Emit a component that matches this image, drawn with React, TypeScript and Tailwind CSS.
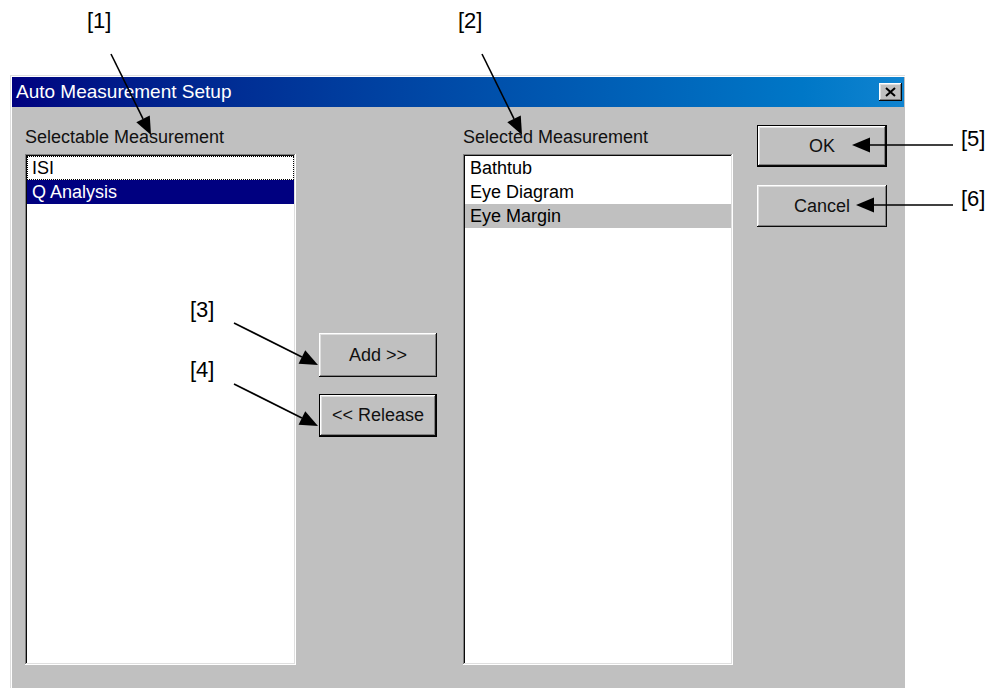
import { type FC } from "react";

const raised =
  "shadow-[inset_-1px_-1px_#0a0a0a,inset_1px_1px_#ffffff,inset_-2px_-2px_#808080,inset_2px_2px_#dfdfdf]";
const sunken =
  "shadow-[inset_-1px_-1px_#ffffff,inset_1px_1px_#808080,inset_-2px_-2px_#dfdfdf,inset_2px_2px_#0a0a0a]";

/** 注釈の矢印（線＋塗りつぶし三角） */
const Arrow: FC<{ x1: number; y1: number; x2: number; y2: number }> = ({ x1, y1, x2, y2 }) => {
  const dx = x2 - x1;
  const dy = y2 - y1;
  const len = Math.hypot(dx, dy);
  const ux = dx / len;
  const uy = dy / len;
  const bx = x2 - ux * 18;
  const by = y2 - uy * 18;
  const px = -uy * 7.5;
  const py = ux * 7.5;
  return (
    <g>
      <line x1={x1} y1={y1} x2={bx} y2={by} stroke="#000" strokeWidth={1.6} />
      <polygon points={`${x2},${y2} ${bx + px},${by + py} ${bx - px},${by - py}`} fill="#000" />
    </g>
  );
};

const Button: FC<{ label: string; isDefault?: boolean; className?: string }> = ({
  label,
  isDefault,
  className = "",
}) => (
  <div
    className={`flex items-center justify-center bg-[#c0c0c0] text-[18px] leading-[21px] text-[#111] ${
      isDefault ? "border border-black" : ""
    } ${className}`}
  >
    <div className={`flex h-full w-full items-center justify-center ${raised}`}>{label}</div>
  </div>
);

const ListBox: FC<{ children: React.ReactNode }> = ({ children }) => (
  <div className={`h-[511px] bg-white p-[2px] ${sunken}`}>{children}</div>
);

const labels = [
  { t: "[1]", x: 87, y: 10 },
  { t: "[2]", x: 458, y: 10 },
  { t: "[3]", x: 190, y: 299 },
  { t: "[4]", x: 190, y: 359 },
  { t: "[5]", x: 961, y: 128 },
  { t: "[6]", x: 961, y: 188 },
];

export default function App() {
  return (
    <div className="relative h-[688px] w-[1006px] overflow-hidden bg-white font-['Liberation_Sans',Arial,sans-serif] text-black">
      <div className="pl-[10px] pt-[75px]">
        {/* ダイアログ本体 */}
        <div className="h-[613px] w-[895px] bg-[#c0c0c0] pl-[2px] pt-[2px] shadow-[inset_1px_1px_#dfdfdf,inset_2px_2px_#ffffff]">
          {/* タイトルバー */}
          <div className="flex h-[30px] w-[892px] items-center justify-between bg-linear-to-r from-[#000080] to-[#1084d0] pl-[4px] pr-[2px]">
            <span className="text-[19px] leading-[22px] text-white">Auto Measurement Setup</span>
            <div className={`flex h-[18px] w-[23px] items-center justify-center bg-[#c0c0c0] ${raised}`}>
              <svg width="11" height="10" viewBox="0 0 11 10">
                <path d="M1 1 L10 9 M10 1 L1 9" stroke="#000" strokeWidth="2" />
              </svg>
            </div>
          </div>

          {/* コンテンツ */}
          <div className="flex pl-[13px] pt-[18px]">
            {/* 選択可能な測定 */}
            <div className="w-[271px]">
              <div className="h-[29px] pt-[2px] text-[18px] leading-[21px] text-[#111]">Selectable Measurement</div>
              <ListBox>
                <div className="h-[24px] border border-dotted border-black pl-[4px] text-[18px] leading-[22px]">ISI</div>
                <div className="h-[24px] bg-[#000080] pl-[5px] text-[18px] leading-[24px] text-white">Q Analysis</div>
              </ListBox>
            </div>

            {/* 追加・解除ボタン */}
            <div className="ml-[23px] w-[118px] pt-[208px]">
              <Button label="Add >>" className="h-[44px]" />
              <Button label="<< Release" isDefault className="mt-[17px] h-[43px]" />
            </div>

            {/* 選択済みの測定 */}
            <div className="ml-[26px] w-[270px]">
              <div className="h-[29px] pt-[2px] text-[18px] leading-[21px] text-[#111]">Selected Measurement</div>
              <ListBox>
                <div className="h-[24px] pl-[5px] text-[18px] leading-[24px]">Bathtub</div>
                <div className="h-[24px] pl-[5px] text-[18px] leading-[24px]">Eye Diagram</div>
                <div className="h-[24px] bg-[#c0c0c0] pl-[5px] text-[18px] leading-[24px]">Eye Margin</div>
              </ListBox>
            </div>

            {/* OK・キャンセル */}
            <div className="ml-[24px] w-[130px]">
              <Button label="OK" isDefault className="h-[42px]" />
              <Button label="Cancel" className="mt-[18px] h-[42px]" />
            </div>
          </div>
        </div>
      </div>

      {/* 注釈 */}
      <svg className="pointer-events-none absolute left-0 top-0" width="1006" height="688">
        <Arrow x1={111} y1={54} x2={151} y2={135} />
        <Arrow x1={482} y1={54} x2={522} y2={135} />
        <Arrow x1={234} y1={323} x2={318} y2={365} />
        <Arrow x1={234} y1={384} x2={318} y2={426} />
        <Arrow x1={953} y1={145} x2={852} y2={145} />
        <Arrow x1={953} y1={205} x2={856} y2={205} />
      </svg>
      {labels.map((l) => (
        <span
          key={l.t}
          className="absolute text-[22px] leading-[22px] text-black"
          style={{ left: l.x, top: l.y }}
        >
          {l.t}
        </span>
      ))}
    </div>
  );
}
